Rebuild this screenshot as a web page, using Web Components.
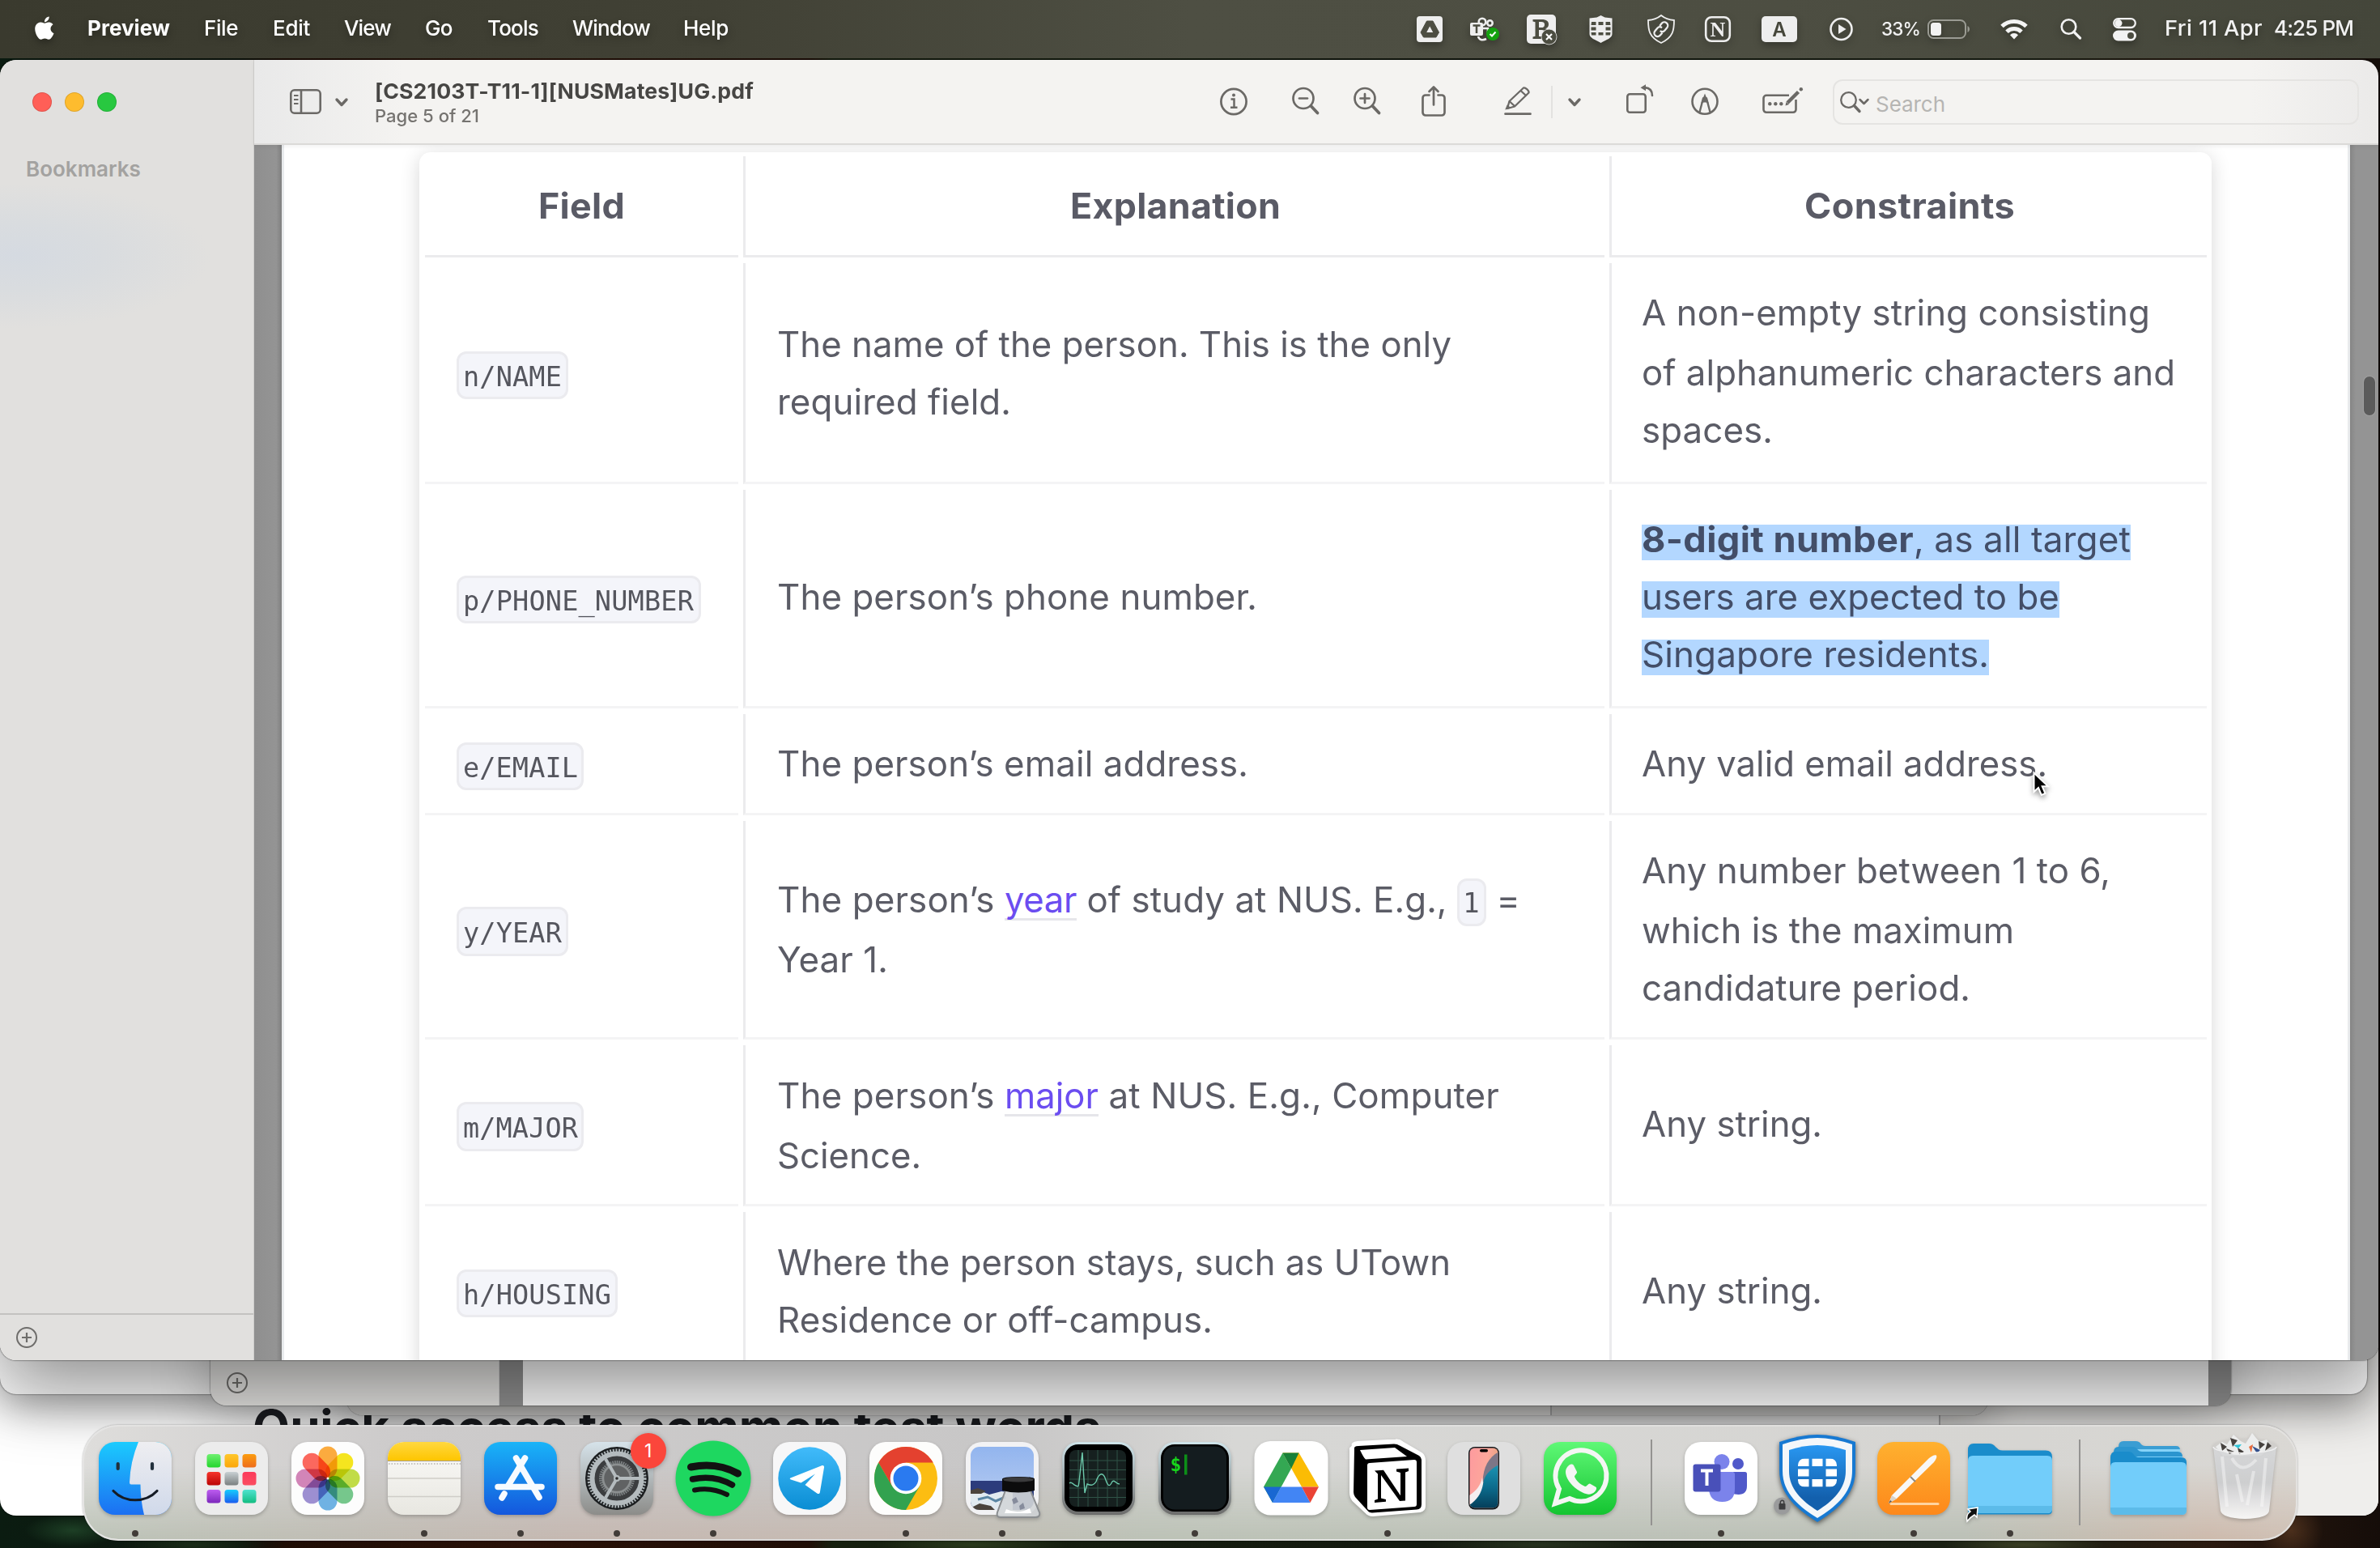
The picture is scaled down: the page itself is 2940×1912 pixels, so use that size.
<!DOCTYPE html>
<html lang="en">
<head>
<meta charset="utf-8">
<title>Preview</title>
<style>
html,body{margin:0;padding:0;width:2940px;height:1912px;overflow:hidden;background:#0c140f}
body{font-family:Inter,"Liberation Sans",sans-serif;font-optical-sizing:none;font-variation-settings:"opsz" 14;-webkit-font-smoothing:antialiased}
</style>
</head>
<body>
<mac-desktop></mac-desktop>
<script>
const ICONS = {
apple:`<path fill="#fff" d="M21.500 16.600c0-3.600 2.900-5.300 3.100-5.400-1.700-2.500-4.300-2.800-5.200-2.800-2.200-.2-4.300 1.300-5.400 1.300s-2.800-1.300-4.700-1.200C6.900 8.500 4.700 9.900 3.400 12c-2.500 4.300-.6 10.700 1.800 14.200 1.200 1.700 2.600 3.600 4.500 3.600 1.800-.1 2.500-1.200 4.700-1.200s2.800 1.200 4.700 1.100c1.900 0 3.200-1.700 4.400-3.500 1.400-2 1.900-3.900 2-4-.1 0-4-1.500-4-5.600zM18.200 6.100C19.200 4.900 19.900 3.200 19.700 1.500c-1.500.1-3.200 1-4.200 2.200-.9 1.100-1.700 2.800-1.500 4.500 1.600.1 3.200-.9 4.200-2.100z"/>`,
mdrive:`<rect y="2" width="32" height="32" rx="4" fill="#eee"/><path d="M12.500 8h7.500l7.500 14-3.500 6H8.500L5 22z" fill="#4c4d41" stroke="#4c4d41" stroke-linejoin="round"/><path d="M16.200 14.500l4 7.500h-8z" fill="#eee"/>`,
mteams:`<g fill="none" stroke="#eee" stroke-width="2.600"><circle cx="15" cy="9" r="4.300"/><circle cx="24.500" cy="10.500" r="3.200"/><path d="M16 17h6v8M10 27c1 4 5 5.500 10 3"/></g><rect y="10" width="16" height="16" rx="2" fill="#eee"/><path d="M3.500 13.500h9M8 13.500V23" stroke="#4c4d41" stroke-width="2.500"/><circle cx="28" cy="24" r="8" fill="#13a10e"/><path d="M24.500 24l2.500 2.500 4.500-5" fill="none" stroke="#fff" stroke-width="2"/>`,
mb:`<rect width="36" height="36" rx="5" fill="#eee"/><path fill="#4c4d41" fill-rule="evenodd" d="M7.500 6h11c6 0 8.500 2.500 8.500 6 0 3-1.500 4.500-4 5.300 3 .8 5 2.700 5 6 0 4-3 6.700-9 6.700H7.500v-2.500l3-.7V9.200l-3-.7zM15 9v7h3c2.500 0 4-1 4-3.600S20.500 9 18 9zm0 10v8h3.500c3 0 4.500-1.300 4.500-4s-1.500-4-4.500-4z"/><circle cx="27.500" cy="27.500" r="9.500" fill="#4c4d41" stroke="#eee" stroke-width=".8"/><path d="M24 24l7 7M31 24l-7 7" stroke="#fff" stroke-width="2.200"/>`,
mforti:`<path fill="#eee" d="M14.500 1l5 2.500 9 1V24c0 5-7 7-14 11C7.500 31 .5 29 .5 24V4.500l9-1z"/><g fill="#4c4d41"><path d="M3 9h5.500v4H2.500zM11.500 9h6v4h-6zM20.500 9H26l.5 4h-6zM2.500 15.500h6v4h-6zM20.500 15.500h6v4h-6zM2.500 22h6v3.500H3zM11.500 22h6v3.500h-6zM20.500 22h6l-.5 3.500h-5.500z"/></g>`,
mshield:`<g fill="none" stroke="#eee" stroke-width="1.800"><path d="M17 1c5 4 10 5.500 16 6 0 12-1 21-16 28C2 28 1 19 1 7c6-.5 11-2 16-6z"/><g stroke-width="2.300" transform="rotate(40 17 18)"><path d="M13 16v-4a4.200 4.200 0 018.400 0v4.500a4.200 4.200 0 01-4 4"/><path d="M21 20.500v4a4.200 4.200 0 01-8.400 0V20a4.200 4.200 0 014-4"/></g></g>`,
mn:`<rect x="1.200" y="3.200" width="29.600" height="29.600" rx="7" fill="none" stroke="#eee" stroke-width="2.600"/><text x="16" y="27" text-anchor="middle" font-family="Liberation Serif,serif" font-weight="700" font-size="26" fill="#eee">N</text>`,
ma:`<rect y="2" width="44" height="32" rx="5" fill="#eee"/><text x="22" y="27" text-anchor="middle" font-family="Inter,sans-serif" font-weight="600" font-size="24" fill="#45463a">A</text>`,
mplay:`<circle cx="14.500" cy="18" r="13" fill="none" stroke="#eee" stroke-width="2.600"/><path d="M11 12l9.500 6-9.500 6z" fill="#eee"/>`,
mbatt:`<rect x="1" y="7" width="46" height="22" rx="6.500" fill="none" stroke="#9a9b93" stroke-width="2"/><rect x="4" y="10" width="13" height="16" rx="3.500" fill="#f2f2f2"/><path d="M49.500 14c3.300 1.500 3.300 6.500 0 8z" fill="#9a9b93"/>`,
mwifi:`<g fill="none" stroke="#f4f4f4" stroke-width="5"><path d="M2 14.500a21.500 21.500 0 0130 0"/><path d="M8 21.300a12.800 12.800 0 0118 0"/></g><path d="M17 30.500l-5-5.300a7 7 0 0110 0z" fill="#f4f4f4"/>`,
msearch:`<circle cx="10.500" cy="15" r="8.800" fill="none" stroke="#f2f2f2" stroke-width="2.600"/><path d="M17 21.500l7.500 7.500" stroke="#f2f2f2" stroke-width="3.200" stroke-linecap="round"/>`,
mcc:`<rect x="1.200" y="5.200" width="26.600" height="10.800" rx="5.400" fill="none" stroke="#f2f2f2" stroke-width="2.300"/><circle cx="7" cy="10.600" r="4.500" fill="#f2f2f2"/><rect x="0" y="19.500" width="29" height="13" rx="6.500" fill="#f2f2f2"/><circle cx="22" cy="26" r="4" fill="#4c4d41"/>`,
sidebar:`<g fill="none" stroke="#6b6966" stroke-width="2.600"><rect x="1.300" y="7.300" width="36.400" height="28.400" rx="4.500"/><path d="M14 7v29"/><path d="M5 14h5.500M5 19h5.500M5 24h5.500" stroke-width="2"/></g>`,
chev:`<path d="M2 19l6 6.500 6-6.500" fill="none" stroke="#6b6966" stroke-width="3.400" stroke-linecap="round" stroke-linejoin="round"/>`,
info:`<circle cx="17" cy="21.500" r="15.600" fill="none" stroke="#6b6966" stroke-width="2.700"/><circle cx="17" cy="13.600" r="2" fill="#6b6966"/><path d="M13.500 18.500h4v10M13 28.700h8.500" fill="none" stroke="#6b6966" stroke-width="2.500"/>`,
zout:`<g fill="none" stroke="#6b6966" stroke-width="2.700" stroke-linecap="round"><circle cx="14" cy="17.500" r="12.500"/><path d="M9 17.500h10"/><path d="M23.500 27l8 8.500" stroke-width="3.800"/></g>`,
zin:`<g fill="none" stroke="#6b6966" stroke-width="2.700" stroke-linecap="round"><circle cx="14" cy="17.500" r="12.500"/><path d="M8.500 17.500h11M14 12v11"/><path d="M23.500 27l8 8.500" stroke-width="3.800"/></g>`,
share:`<g fill="none" stroke="#6b6966" stroke-width="2.700" stroke-linecap="round" stroke-linejoin="round"><path d="M9.500 13.500H5a3.500 3.500 0 00-3.500 3.500v18A3.500 3.500 0 005 38.500h20a3.500 3.500 0 003.500-3.500V17a3.500 3.500 0 00-3.500-3.500h-4.500"/><path d="M15 25.500V4M9.500 9L15 3.500 20.500 9"/></g>`,
pencil:`<g fill="none" stroke="#6b6966" stroke-width="2.300" stroke-linejoin="round"><path d="M4 30l2.500-9L24 4.500c2-1 7 3.500 6.500 6L13 27.500z"/><path d="M6.500 21l7 6.500M20.500 8l7 6.500"/></g><path d="M1.200 31.500l2.500-6 5.500 4z" fill="#6b6966"/><path d="M1.500 36.700h31" stroke="#6b6966" stroke-width="2.700" stroke-linecap="round"/>`,
rotate:`<g fill="none" stroke="#6b6966" stroke-width="2.600" stroke-linecap="round"><rect x="1.300" y="12.300" width="22.400" height="22.400" rx="3"/><path d="M21 4c7 0 11 3.500 11 10"/></g><path d="M17.500 4.200L24 .2v8z" fill="#6b6966"/>`,
markup:`<circle cx="17" cy="21.300" r="15.500" fill="none" stroke="#6b6966" stroke-width="2.600"/><path d="M10.500 34.500l4.500-17h4l4.500 17" fill="none" stroke="#6b6966" stroke-width="2.400"/><path d="M17 11.500l5 12.500c-3-2-7-2-10 0z" fill="#6b6966"/>`,
form:`<path d="M33 13.800H5A3.500 3.500 0 001.500 17.300v14A3.500 3.500 0 005 34.800h33a3.500 3.500 0 003.500-3.500V19" fill="none" stroke="#6b6966" stroke-width="2.600"/><g fill="#6b6966"><circle cx="9.300" cy="24.300" r="2.200"/><circle cx="16.300" cy="24.300" r="2.200"/><circle cx="23.300" cy="24.300" r="2.200"/></g><path d="M31 23L44.500 9.500" stroke="#6b6966" stroke-width="4.500"/><path d="M28.500 26.500l1-4.500 3.500 3z" fill="#6b6966"/><circle cx="47.800" cy="6.300" r="2.200" fill="#6b6966"/>`,
find:`<circle cx="10.500" cy="19.500" r="9.300" fill="none" stroke="#6b6966" stroke-width="2.300"/><path d="M17.500 26.500l6.500 7" stroke="#6b6966" stroke-width="3.400" stroke-linecap="round"/><path d="M24.500 19l5 5 5-5" fill="none" stroke="#6b6966" stroke-width="2.500" stroke-linecap="round" stroke-linejoin="round"/>`,
plus:`<circle cx="13" cy="13" r="12" fill="none" stroke="#6e6d6b" stroke-width="2"/><path d="M13 7v12M7 13h12" stroke="#6e6d6b" stroke-width="2.200"/>`,
cursor:`<path d="M1.500 1.500v23.500l5.500-5 3.800 9 4.700-2-3.800-8.700h7.300z" fill="#000" stroke="#fff" stroke-width="2"/>`,
finder:`<defs><linearGradient id="a" x2="0" y2="1"><stop stop-color="#1bcbfe"/><stop offset="1" stop-color="#1c6ff2"/></linearGradient><linearGradient id="b" x2="0" y2="1"><stop stop-color="#eeeef1"/><stop offset="1" stop-color="#d0d9ea"/></linearGradient><clipPath id="c"><rect width="90" height="90" rx="20"/></clipPath></defs><g clip-path="url(#c)"><rect width="90" height="90" fill="url(#a)"/><path d="M49 0Q39 24 38 50q0 2.500 2 2.500h11.500q0 19 4.500 37.500h34V0z" fill="url(#b)"/></g><path d="M23.700 27v6M66 27v6" stroke="#22303c" stroke-width="4.200" stroke-linecap="round"/><path d="M18 60.500c14 15 40 15 54 0" fill="none" stroke="#151b24" stroke-width="3.200" stroke-linecap="round"/>`,
launchpad:`<rect width="90" height="90" rx="20" fill="#ececec"/><g>${[['#6ff070','#23d52d'],['#ffc72b','#fba60a'],['#fb9d0f','#ee6c1b'],['#f5342b','#bb0505'],['#c8d0d3','#7a8080'],['#fc3a5b','#fb4d60'],['#bd5df0','#7c27bb'],['#16cdfd','#1b5df0'],['#4fe3d0','#12bd81']].map((c,i)=>`<linearGradient id="g${i}" x2="0" y2="1"><stop stop-color="${c[0]}"/><stop offset="1" stop-color="${c[1]}"/></linearGradient><rect x="${14.500+(i%3)*22}" y="${15+Math.floor(i/3)*22}" width="17" height="16.500" rx="3.500" fill="url(#g${i})"/>`).join('')}</g>`,
photos:`<rect width="90" height="90" rx="20" fill="#fdfdfd"/><g style="isolation:isolate">${['#fba024','#f4e200','#b9d72e','#63c07c','#5ba8e0','#9080cb','#cc74ae','#fb5348'].map((c,i)=>`<rect x="33.500" y="5.500" width="23" height="39" rx="11.500" fill="${c}" style="mix-blend-mode:multiply" opacity=".88" transform="rotate(${i*45} 45 45)"/>`).join('')}</g><circle cx="45" cy="45" r="1.500" fill="#fff"/>`,
notes:`<defs><clipPath id="c"><rect width="90" height="90" rx="20"/></clipPath><linearGradient id="a" x2="0" y2="1"><stop stop-color="#ffd83f"/><stop offset="1" stop-color="#fec500"/></linearGradient><linearGradient id="b" x2="0" y2="1"><stop stop-color="#fbfaf8"/><stop offset="1" stop-color="#e8e7e1"/></linearGradient></defs><g clip-path="url(#c)"><rect width="90" height="90" fill="url(#b)"/><rect width="90" height="23" fill="url(#a)"/><path d="M0 23.500h90" stroke="#a99f86" stroke-width="1.200"/><path d="M1 27h90" stroke="#b5b3ae" stroke-width="1.500" stroke-dasharray="1.500 2"/><path d="M0 45h90M0 67.500h90" stroke="#cfcdc8" stroke-width="1.500"/></g>`,
appstore:`<defs><linearGradient id="a" x2="0" y2="1"><stop stop-color="#19b4f8"/><stop offset="1" stop-color="#1457dd"/></linearGradient></defs><rect width="90" height="90" rx="20" fill="url(#a)"/><g stroke="#f7fbff" stroke-width="7.500" stroke-linecap="round"><path d="M17 55.500h54"/><path d="M39.500 20L68 68.500"/><path d="M50.500 20L30 53.500"/><path d="M25 64l-3 5"/></g>`,
settings:`<defs><linearGradient id="a" x2="0" y2="1"><stop stop-color="#d6e3ea"/><stop offset="1" stop-color="#8c8c89"/></linearGradient></defs><rect width="90" height="90" rx="20" fill="url(#a)"/><circle cx="45" cy="45" r="39" fill="#1b1e20"/><circle cx="45" cy="45" r="34" fill="none" stroke="#aab2b5" stroke-width="5" stroke-dasharray="2 1.600"/><circle cx="45" cy="45" r="30.500" fill="#3b3d3f" stroke="#b4bbbe" stroke-width="6"/><circle cx="45" cy="45" r="19.500" fill="#565858" stroke="#7d8284" stroke-width="5" stroke-dasharray="1.600 1"/><circle cx="45" cy="45" r="17" fill="#606263" stroke="#8b8f90" stroke-width="2.500"/><path d="M45 45h28M45 45L31 21M45 45L31 69" stroke="#b4bbbe" stroke-width="4"/><circle cx="45" cy="45" r="4" fill="#b4bbbe"/><circle cx="45" cy="45" r="1.800" fill="#2b2b2b"/>`,
spotify:`<circle cx="45" cy="45" r="46.500" fill="#1ed760"/><g fill="none" stroke="#121212" stroke-linecap="round"><path d="M17.500 31c20-4 41-1.500 58 8" stroke-width="9"/><path d="M19.500 46c16-3.500 34-1.500 49 7" stroke-width="7.500"/><path d="M22 59.500c14-3 27-1 40 5.500" stroke-width="6"/></g>`,
telegram:`<defs><linearGradient id="a" x2="0" y2="1"><stop stop-color="#41bbfa"/><stop offset="1" stop-color="#0a8dd3"/></linearGradient></defs><rect width="90" height="90" rx="20" fill="#f7f7f8"/><circle cx="45" cy="45" r="38.700" fill="url(#a)"/><path d="M21.500 44.500L60 29.300c2-.7 3.300.3 3 2.300L57.800 62.500c-.5 1.700-2 2-3.500 1L39.500 53 52 39.500 34.500 50.500l-12.500-4c-1.500-.6-1.700-1.400-.5-2z" fill="#fff"/>`,
chrome:`<rect width="90" height="90" rx="20" fill="#fdfdfc"/><circle cx="45" cy="45" r="39" fill="#fcbd12"/><path d="M11.200 25.500A39 39 0 0178.800 25.500H45L28.100 54.700z" fill="#e4412f"/><path d="M11.200 25.500A39 39 0 0045 84L61.900 54.700H45L28.100 54.700z" fill="#32a24f"/><circle cx="45" cy="45" r="19.300" fill="#fff"/><circle cx="45" cy="45" r="15.500" fill="#2a7af0"/>`,
preview:`<defs><clipPath id="c"><rect x="6" y="6" width="78" height="78" rx="11"/></clipPath><linearGradient id="s" x2="0" y2="1"><stop stop-color="#8fb3ee"/><stop offset="1" stop-color="#a9c3f0"/></linearGradient></defs><rect width="90" height="90" rx="20" fill="#f2f2f4"/><g clip-path="url(#c)"><rect width="90" height="50" fill="url(#s)"/><rect y="48" width="90" height="42" fill="#2c3c7c"/><path d="M5 62l12-2 12 5 15-4 14 2v22H5z" fill="#e1eaf0"/><path d="M5 60l10-3 10 4-6 3H5zM5 82l12-6 14 3 6 6H5z" fill="#4b443d"/><path d="M15 71l12-3 10 5 12-5" fill="none" stroke="#5b86a4" stroke-width="3"/></g><path d="M49 60h31l11 27c1 4-1 6-5 6H43c-4 0-5-2-4-6z" fill="#d3d6d8" fill-opacity=".9" stroke="#8a8d90" stroke-width="2"/><path d="M50 83q15 7 29-1l2 6H48z" fill="#fff"/><path d="M57 71l5-3 3 6-6 3zM66 79l5-4 2 7-6 2z" fill="#868c9c"/><path d="M45 46q0-3 20-3t20 3v14q-20 5-40 0z" fill="#0c0c0d"/><ellipse cx="65" cy="46.500" rx="19" ry="3" fill="#3a3a3c"/>`,
activity:`<defs><linearGradient id="a" x2="0" y2="1"><stop stop-color="#cfe4ea"/><stop offset="1" stop-color="#6c6c6b"/></linearGradient></defs><rect width="90" height="90" rx="20" fill="url(#a)"/><rect x="3" y="3" width="84" height="83" rx="17" fill="#000"/><rect x="9" y="10" width="70" height="70" rx="8" fill="#16201f"/><path d="M9 23h70M9 34.500h70M9 46h70M9 57h70M9 68.500h70M20 10v70M32 10v70M44 10v70M56 10v70M68 10v70" stroke="#2f5347" stroke-width="1"/><path d="M9 51c3-3 4 2 8 3 3 1 3 3 4-5l4-36 3 50 3-11c5 2 8 2 11-3 4-12 9-12 12-2 3 9 5 8 8 2 3-3 4 3 9 3" fill="none" stroke="#6cc9ab" stroke-width="1.400"/>`,
terminal:`<defs><linearGradient id="a" x2="0" y2="1"><stop stop-color="#cfe4ea"/><stop offset="1" stop-color="#6c6c6b"/></linearGradient></defs><rect width="90" height="90" rx="20" fill="url(#a)"/><rect x="3" y="3" width="84" height="83" rx="17" fill="#000"/><rect x="6" y="5.500" width="78" height="78" rx="14" fill="#141c1f"/><text x="14.500" y="36" font-family="DejaVu Sans Mono,monospace" font-weight="700" font-size="23" fill="#18d61c">$</text><rect x="32" y="15.500" width="3.500" height="25" fill="#0c8f18"/>`,
drive:`<rect x="-.5" y="-1" width="91" height="91.500" rx="20" fill="#fff"/><path d="M34.500 13.500h20L79 55.500H58z" fill="#fbbc04"/><path d="M34.500 13.500L45 33 22 75 11 55.500z" fill="#34a853"/><path d="M34.500 13.500h20L45 33z" fill="#188038"/><path d="M11 55.500h21.500L22 75z" fill="#1967d2"/><path d="M32.500 55.500H58L68.500 75H22z" fill="#4285f4"/><path d="M58 55.500h21L68.500 75z" fill="#ea4335"/>`,
notion:`<path d="M2 5Q0 1 8 0L55-2.500q5-.5 9 3L87 14q4 3 4 9v56q0 6-6 7l-58 5q-6 0-9-4L2 72Q-1 68-1 62V8z" fill="#fff" stroke="#fff" stroke-width="2"/><path d="M4 9q-1-4 5-4l44-2.500q4 0 7 2L84 17q3 2 3 5v55q0 6-6 6.500l-55 4q-4 0-6-3L5 68q-2-3-2-6z" fill="#000"/><path d="M11 10l43-3 15 11-51 3.500q-2-1-7-11.500z" fill="#fff"/><path d="M20 29q0-3 3-3l55-4q3 0 3 3v52q0 3-3 3l-55 4q-3 0-3-3z" fill="#fff"/><path d="M29 35.500l11-.7 21 31.500V38l-5-1.500V33.500l15-1V36l-4 1.500V72.500l-7 .5L37 41v28.500l6 1.500v2.800L29 75v-3l4-1.500V39.500z" fill="#000"/>`,
iphone:`<defs><clipPath id="c"><rect x="27.500" y="7.500" width="35" height="74" rx="6"/></clipPath><linearGradient id="p" x2="1" y2=".3"><stop stop-color="#fd9a9e"/><stop offset=".6" stop-color="#fda79b"/><stop offset="1" stop-color="#e5a27c"/></linearGradient><linearGradient id="u" x2="0" y2="1"><stop stop-color="#1c94b4"/><stop offset=".5" stop-color="#0c6c8d"/><stop offset="1" stop-color="#053a55"/></linearGradient></defs><rect width="90" height="90" rx="20" fill="#dfdfdf"/><rect x="26" y="6" width="38" height="77.500" rx="8" fill="#14181c"/><g clip-path="url(#c)"><rect x="27" y="7" width="37" height="76" fill="url(#p)"/><path d="M64 12C52 18 44 30 43.500 50L64 32z" fill="#7d7687"/><path d="M43 44c-2 10-8 17-16 22v14h10l8-24z" fill="#f6eef0"/><path d="M64 28C52 34 45 42 44 52 42 64 36 72 27 78v6h37z" fill="url(#u)"/></g><rect x="40" y="9" width="10" height="3.500" rx="1.700" fill="#000"/>`,
whatsapp:`<defs><linearGradient id="a" x2="0" y2="1"><stop stop-color="#5ff876"/><stop offset="1" stop-color="#14c431"/></linearGradient></defs><rect width="90" height="90" rx="20" fill="url(#a)"/><path d="M14 76l5-18a31.500 31.500 0 1113 12z" fill="none" stroke="#f4f6f4" stroke-width="6"/><path d="M31 29c2-2 5-2 6 0l4 8c.500 2-3 4-3 6 2 5 8 10 13 12 2 .5 4-4 6-3.500l7 4c2 1 1 4-1 6-4 4-9 4-15 1-9-4-17-12-20-20-2-6-1-10 3-13.500z" fill="#f4f6f4"/>`,
teams:`<rect width="90" height="90" rx="20" fill="#fff"/><circle cx="66" cy="27" r="7" fill="#5059c9"/><circle cx="46" cy="24.500" r="9.500" fill="#7b83eb"/><path d="M60 37h14.500q2.500 0 2.500 2.500V54q0 11-10.500 11T56 58z" fill="#5059c9"/><path d="M32 37h27q3 0 3 3v18q0 16-15.500 16T30 58z" fill="#7b83eb"/><rect x="10.500" y="27.500" width="34" height="34" rx="3" fill="#4950b9"/><path d="M20 35.500h15M27.500 35.500V54" stroke="#fff" stroke-width="4"/>`,
forti:`<defs><linearGradient id="a" x2="0" y2="1"><stop stop-color="#2997f1"/><stop offset=".8" stop-color="#1360ad"/></linearGradient><clipPath id="r"><rect x="21" y="20.500" width="48" height="35" rx="8"/></clipPath></defs><path d="M-2 0Q24-9 45-9T92 0v35c0 32-25 50-47 64C23 85-2 67-2 35z" fill="#1779d2" style="filter:drop-shadow(0 2px 3px #0006)"/><path d="M2 3Q26-5 45-5T88 3v33c0 28-22 45-43 58C24 81 2 64 2 36z" fill="#f4f7fa"/><path d="M10 10q18-6 35-6t35 6v26c0 22-16 37-35 49C26 73 10 58 10 36z" fill="url(#a)"/><g clip-path="url(#r)" fill="#fff"><path d="M21 20.500h13.500v9.500H21zM38.500 20.500h13v9.500h-13zM55.500 20.500H69v9.500H55.500zM21 33.500h13.500v9H21zM55.500 33.500H69v9H55.500zM21 46h13.500v9.500H21zM38.500 46h13v9.500h-13zM55.500 46H69v9.500H55.500z"/></g><circle cx="1.500" cy="79" r="10.500" fill="#9a9b9c"/><rect x="-2.500" y="76" width="8" height="7.500" rx="1" fill="#3c3c3e"/><path d="M-.7 77v-2.500a2.200 2.200 0 014.400 0V77" fill="none" stroke="#3c3c3e" stroke-width="1.500"/>`,
pages:`<defs><linearGradient id="a" x2="0" y2="1"><stop stop-color="#ffb12f"/><stop offset="1" stop-color="#fd881b"/></linearGradient></defs><rect width="90" height="90" rx="20" fill="url(#a)"/><path d="M17 76.500h58" stroke="#ffd3a0" stroke-width="3" stroke-linecap="round"/><path d="M14 76l4-10L64 20q6-5 9-3.500 1.500 3-3.500 9L24 70z" fill="#f8f7f6"/><path d="M14 76l4-10 6 4z" fill="#d9d2c8"/><path d="M14 76l2-4 2 1.500z" fill="#555"/><path d="M41 43l6 6" stroke="#8b8781" stroke-width="2"/>`,
folder:`<path d="M-7 10q0-8 7-8h19q5 0 8 4l4 3.500q2 1 5 1h53q8 0 8 8v66q0 5-5 5H-2q-5 0-5-5z" fill="#1a8ccb"/><path d="M-7 23q0-6 6-6h92q6 0 6 6v59q0 6-6 6H-1q-6 0-6-6z" fill="#72cdfa"/><path d="M-7 79h104v3q0 6-6 6H-1q-6 0-6-6z" fill="#5cbbe9"/><path d="M-8 98q-2-8 4-12l-3-3 12-2-1 12-3-3q-5 3-9 8z" fill="#111" stroke="#fff" stroke-width="1.500"/>`,
stack:`<path d="M8 6q0-7 6-7h15q5 0 7 4 2 2 5 2h38q5 0 5 5v20H4z" fill="#3a9dd3"/><path d="M13 9h71v8H13z" fill="#86d3f8"/><path d="M2 13q0-7 6-7h17q5 0 7 4 2 2 5 2h44q6 0 6 6v12H2z" fill="#2b95cf"/><path d="M5 18h82v7H5z" fill="#7dd0f9"/><path d="M-2 20q0-8 6-8h16q5 0 7 4 2 3 5 3h53q7 0 7 6v57q0 7-6 7H4q-6 0-6-6z" fill="#1a8ccb"/><path d="M-2 31q0-6 6-6h82q6 0 6 6v53q0 6-6 6H4q-6 0-6-6z" fill="#72cdfa"/><path d="M-2 81h94v3q0 6-6 6H4q-6 0-6-6z" fill="#5cbbe9"/>`,
trash:`<defs><linearGradient id="a" x2="0" y2="1"><stop stop-color="#d8d9da"/><stop offset=".5" stop-color="#cfd0d2"/><stop offset="1" stop-color="#fbfbfb"/></linearGradient></defs><ellipse cx="45" cy="5" rx="39" ry="9" fill="#d0cecb"/><path d="M9 6l8-6 6 3 8-12 9 8 6 3 8-13 9 11 9-3 5 8-12 12H18z" fill="#eceded"/><path d="M15 1l8 5-6 5zM27-5l9 3-6 8zM22 8l10 4-6 3zM62-1l8 4-7 6zM73 0l5 5-8 6zM36 7l8 5-6 3z" fill="#46423f"/><path d="M31 4l10-1-4 5z" fill="#2ec4d8"/><path d="M50 6l5-3-2 10z" fill="#ea6b3b"/><path d="M54 5l10 5-4 4z" fill="#34508c"/><path d="M6 6q20 12 39 10T84 6l-9 79q-1 9-30 10-28-1-30-10z" fill="url(#a)" fill-opacity=".93"/><path d="M6 6q0 6 39 8 39-2 39-8" fill="none" stroke="#f1f1f1" stroke-width="1.500"/><path d="M17 18l6 62M29 20q12 22 30 2M71 20l-5 60M35 40l7 34M56 36l-8 42" stroke="#fff" stroke-opacity=".4" stroke-width="4" fill="none"/>`
};
const define = (name, css, html, after) => {
  const t = document.createElement('template');
  t.innerHTML = `<style>${css}</style>${html}`;
  customElements.define(name, class extends HTMLElement {
    connectedCallback(){
      if (this.shadowRoot) return;
      this.attachShadow({mode:'open'}).append(t.content.cloneNode(true));
      if (after) after(this);
    }
  });
};

/* A glyph from the icon table, drawn 1:1 in its own box */
define('ui-icon', ':host{display:block;flex:none}svg{display:block;overflow:visible}', '<svg></svg>', el => {
  const w = el.getAttribute('w') || 90, h = el.getAttribute('h') || 90, s = el.shadowRoot.querySelector('svg');
  s.setAttribute('width', w); s.setAttribute('height', h); s.setAttribute('viewBox', `0 0 ${w} ${h}`);
  s.innerHTML = ICONS[el.getAttribute('name')];
});

/* One line of text fitted to an exact width: glyphs widen a little, tracking takes the rest */
define('fit-text', ':host{display:block;white-space:pre;flex:none}span{display:inline-block;white-space:pre;transform-origin:0 50%}', '<span><slot></slot></span>', el => {
  const w = +el.getAttribute('w'), s = el.shadowRoot.querySelector('span');
  el.style.width = w + 'px';
  const n = el.textContent.length, nat = s.getBoundingClientRect().width;
  if (!nat) return;
  const k = Math.min(1.05, Math.max(1, 1 + (w / nat - 1) * .7));
  el.style.letterSpacing = ((w / k - nat) / n).toFixed(3) + 'px';
  if (k > 1.002) s.style.transform = `scaleX(${k.toFixed(4)})`;
});

define('menu-bar', `
:host{display:flex;align-items:center;height:72px;box-sizing:border-box;padding-left:41px;color:#fff;font-size:26px;line-height:69px;font-weight:500;
 background:linear-gradient(90deg,#3a3a2e 0,#414135 30%,#4e4f43 50%,#4d4e42 75%,#44463a 100%);position:relative;z-index:5}
fit-text,ui-icon{filter:drop-shadow(0 4px 5px rgba(0,0,0,.3))}
fit-text{height:72px}
.b{font-weight:700}.r{display:flex;align-items:center;margin-left:850px;color:#f2f2f2}`,
`<ui-icon name="apple" w="27" h="34"></ui-icon>
<fit-text class="b" w="102" style="margin-left:40px">Preview</fit-text>
<fit-text w="42" style="margin-left:42px">File</fit-text>
<fit-text w="46" style="margin-left:43px">Edit</fit-text>
<fit-text w="58" style="margin-left:42px">View</fit-text>
<fit-text w="34" style="margin-left:42px">Go</fit-text>
<fit-text w="63" style="margin-left:43px">Tools</fit-text>
<fit-text w="96" style="margin-left:42px">Window</fit-text>
<fit-text w="56" style="margin-left:41px">Help</fit-text>
<div class="r">
<ui-icon name="mdrive" w="32" h="36"></ui-icon>
<ui-icon name="mteams" w="36" h="36" style="margin-left:34px"></ui-icon>
<ui-icon name="mb" w="36" h="36" style="margin-left:34px"></ui-icon>
<ui-icon name="mforti" w="29" h="36" style="margin-left:41px"></ui-icon>
<ui-icon name="mshield" w="34" h="36" style="margin-left:43px"></ui-icon>
<ui-icon name="mn" w="32" h="36" style="margin-left:37px"></ui-icon>
<ui-icon name="ma" w="44" h="36" style="margin-left:38px"></ui-icon>
<ui-icon name="mplay" w="29" h="36" style="margin-left:40px"></ui-icon>
<fit-text w="48" style="margin-left:35px;font-size:22.500px;line-height:71px">33%</fit-text>
<ui-icon name="mbatt" w="52" h="36" style="margin-left:9px"></ui-icon>
<ui-icon name="mwifi" w="34" h="36" style="margin-left:38px"></ui-icon>
<ui-icon name="msearch" w="26" h="36" style="margin-left:40px"></ui-icon>
<ui-icon name="mcc" w="29" h="36" style="margin-left:39px"></ui-icon>
<fit-text w="121" style="margin-left:35px">Fri 11 Apr</fit-text>
<fit-text w="98" style="margin-left:14px">4:25 PM</fit-text>
</div>`);

define('side-bar', `
:host{display:flex;flex-direction:column;width:314px;box-sizing:border-box;flex:none;border-right:1px solid #cfcecc;
 background:radial-gradient(ellipse 240px 90px at 20px 242px,#d5dae1 0,#d9dcdf 45%,#e1e0de 100%) #e1e0de}
.t{display:flex;gap:16px;padding:40px 0 0 40px}
.t i{width:24px;height:24px;border-radius:50%;box-shadow:inset 0 0 0 1px rgba(0,0,0,.12)}
fit-text{margin:46px 0 0 32px;font-weight:600;font-size:26px;line-height:50px;color:#a3a2a0}
.f{margin-top:auto;border-top:2px solid #c3c2c0;padding:15px 0 0 20px;box-sizing:border-box;height:58px}`,
`<div class="t"><i style="background:#ff5f57"></i><i style="background:#febc2e"></i><i style="background:#28c840"></i></div>
<fit-text w="142">Bookmarks</fit-text>
<div class="f"><ui-icon name="plus" w="26" h="26"></ui-icon></div>`);

define('tool-bar', `
:host{display:flex;align-items:center;height:105px;flex:none;box-sizing:border-box;padding-left:44px;border-bottom:2px solid #dbdad8;background:linear-gradient(90deg,#e9e9e9,#f4f3f1 7%,#f4f3f1 94%,#ebeae9);position:relative;z-index:1;box-shadow:0 2px 5px rgba(0,0,0,.06)}
ui-icon{margin-top:1px}
.t{margin:3px 0 0 33px;width:467px;flex:none}
.a{font-weight:700;font-size:26px;line-height:32px;color:#474644}
.s{font-size:22px;line-height:28px;color:#757370;font-weight:450}
.d{width:2px;height:40px;background:#e3e2e0;margin-left:24px;flex:none}
.q{display:flex;align-items:center;margin-left:37px;width:650px;height:56px;flex:none;box-sizing:border-box;border:2px solid #e5e4e2;border-radius:12px;padding-left:7px;color:#b6b5b3;font-size:26px;line-height:52px}
.q ui-icon{margin-top:0}.q fit-text{margin:6px 0 0 8px}`,
`<ui-icon name="sidebar" w="39" h="44"></ui-icon>
<ui-icon name="chev" w="16" h="44" style="margin-left:17px"></ui-icon>
<div class="t"><fit-text class="a" w="467">[CS2103T-T11-1][NUSMates]UG.pdf</fit-text><fit-text class="s" w="129">Page 5 of 21</fit-text></div>
<ui-icon name="info" w="34" h="44" style="margin-left:577px"></ui-icon>
<ui-icon name="zout" w="34" h="44" style="margin-left:55px"></ui-icon>
<ui-icon name="zin" w="34" h="44" style="margin-left:42px"></ui-icon>
<ui-icon name="share" w="30" h="44" style="margin-left:50px"></ui-icon>
<ui-icon name="pencil" w="34" h="44" style="margin-left:72px"></ui-icon>
<span class="d"></span>
<ui-icon name="chev" w="16" h="44" style="margin-left:19px"></ui-icon>
<ui-icon name="rotate" w="33" h="44" style="margin-left:56px"></ui-icon>
<ui-icon name="markup" w="34" h="44" style="margin-left:47px"></ui-icon>
<ui-icon name="form" w="50" h="44" style="margin-left:54px"></ui-icon>
<div class="q"><ui-icon name="find" w="36" h="44"></ui-icon><fit-text w="86">Search</fit-text></div>`);

define('code-chip', `
:host{display:flex;box-sizing:border-box;flex:none;border:3px solid #ebebef;border-radius:12px;background:#f4f5fa;padding:3px 0 0 5px;
 font-family:"DejaVu Sans Mono",monospace;font-size:33px;color:#55565e;align-items:center}
fit-text{line-height:40px}`, '<slot></slot>');

define('table-cell', `
:host{display:block;box-sizing:border-box;border-bottom:3px solid #f4f4f5;border-left:3px solid #ebebed;padding-left:39px;min-width:0}
:host([first]){border-left:0}
:host([head]){border-bottom-color:#ebebed;padding-left:0;padding-top:26px;font-weight:650;color:#5a5b66;display:flex;justify-content:center}`, '<slot></slot>');

define('field-table', `
:host{display:block;flex:none;width:2214px;box-sizing:border-box;margin:9px 0 0 170px;padding:5px 7px;border-radius:14px;background:#fff;
 box-shadow:0 4px 24px rgba(0,0,0,.16);color:#5b5c66;font-size:43.500px;line-height:71px;height:1700px}
.g{display:grid;grid-template-columns:387px 1064px 738px;column-gap:6px;row-gap:7px;grid-template-rows:125px 273px 270px 125px 270px 199px 260px}
.c{padding-left:37px}
.h{color:#434e68;background:linear-gradient(transparent 16.500px,#b3d7ff 16.500px 61px,transparent 61px)}
.b{font-weight:700}
.l{display:flex;align-items:center}
.k{color:#6b4df0;background:linear-gradient(#e6e6ea,#e6e6ea) 0 58px/100% 3px no-repeat}`,
`<div class="g">
<table-cell head first><fit-text w="107">Field</fit-text></table-cell>
<table-cell head><fit-text w="260">Explanation</fit-text></table-cell>
<table-cell head><fit-text w="260">Constraints</fit-text></table-cell>

<table-cell first style="padding-top:109px"><code-chip style="width:138px;height:59px"><fit-text w="122">n/NAME</fit-text></code-chip></table-cell>
<table-cell style="padding-top:65px"><fit-text w="833">The name of the person. This is the only</fit-text><fit-text w="289">required field.</fit-text></table-cell>
<table-cell class="c" style="padding-top:26px"><fit-text w="628">A non-empty string consisting</fit-text><fit-text w="659" style="margin-top:3px">of alphanumeric characters and</fit-text><fit-text w="162">spaces.</fit-text></table-cell>

<table-cell first style="padding-top:106px"><code-chip style="width:302px;height:59px"><fit-text w="285">p/PHONE_NUMBER</fit-text></code-chip></table-cell>
<table-cell style="padding-top:97px"><fit-text w="593">The person’s phone number.</fit-text></table-cell>
<table-cell class="c" style="padding-top:26px"><div class="l"><fit-text class="h b" w="336">8-digit number</fit-text><fit-text class="h" w="268">, as all target</fit-text></div><fit-text class="h" w="516">users are expected to be</fit-text><fit-text class="h" w="429">Singapore residents.</fit-text></table-cell>

<table-cell first style="padding-top:35px"><code-chip style="width:157px;height:59px"><fit-text w="142">e/EMAIL</fit-text></code-chip></table-cell>
<table-cell style="padding-top:26px"><fit-text w="582">The person’s email address.</fit-text></table-cell>
<table-cell class="c" style="padding-top:26px"><fit-text w="501">Any valid email address.</fit-text></table-cell>

<table-cell first style="padding-top:106px"><code-chip style="width:138px;height:61px"><fit-text w="122">y/YEAR</fit-text></code-chip></table-cell>
<table-cell style="padding-top:62px"><div class="l"><fit-text w="281">The person’s </fit-text><fit-text class="k" w="89">year</fit-text><fit-text w="470"> of study at NUS. E.g., </fit-text><code-chip style="width:36px;height:59px;margin-top:5px;padding-left:4px"><fit-text w="21">1</fit-text></code-chip><fit-text w="42"> =</fit-text></div><fit-text w="137" style="margin-top:3px">Year 1.</fit-text></table-cell>
<table-cell class="c" style="padding-top:26px"><fit-text w="579">Any number between 1 to 6,</fit-text><fit-text w="460" style="margin-top:3px">which is the maximum</fit-text><fit-text w="406">candidature period.</fit-text></table-cell>

<table-cell first style="padding-top:70px"><code-chip style="width:157px;height:61px"><fit-text w="142">m/MAJOR</fit-text></code-chip></table-cell>
<table-cell style="padding-top:27px"><div class="l"><fit-text w="281">The person’s </fit-text><fit-text class="k" w="116">major</fit-text><fit-text w="495"> at NUS. E.g., Computer</fit-text></div><fit-text w="178" style="margin-top:3px">Science.</fit-text></table-cell>
<table-cell class="c" style="padding-top:62px"><fit-text w="223">Any string.</fit-text></table-cell>

<table-cell first style="padding-top:71px"><code-chip style="width:199px;height:59px"><fit-text w="183">h/HOUSING</fit-text></code-chip></table-cell>
<table-cell style="padding-top:27px"><fit-text w="832">Where the person stays, such as UTown</fit-text><fit-text w="538">Residence or off-campus.</fit-text></table-cell>
<table-cell class="c" style="padding-top:62px"><fit-text w="223">Any string.</fit-text></table-cell>
</div>`);

define('pdf-view', `
:host{display:flex;flex:1;min-height:0;overflow:hidden;background:#929292}
.g{width:34px;flex:none;background:linear-gradient(90deg,#8f8f8f,#949494 80%,#808080)}
.p{flex:1;background:#fff;border:solid #e9ebed;border-width:0 3px;box-sizing:border-box;overflow:hidden}
.s{width:35px;flex:none;background:linear-gradient(90deg,#858585,#949494 20%);box-sizing:border-box;padding:286px 0 0 17px}
.s i{display:block;width:14px;height:48px;border-radius:7px;background:#5b5b5b;box-shadow:0 0 0 1px #a0a0a0}
field-table{margin-left:167px}`,
`<div class="g"></div><div class="p"><field-table></field-table></div><div class="s"><i></i></div>`);

define('preview-window', `
:host{display:flex;border-radius:20px;overflow:hidden}
.m{display:flex;flex-direction:column;flex:1;min-width:0}
side-bar{height:100%}`,
`<side-bar></side-bar><div class="m"><tool-bar></tool-bar><pdf-view></pdf-view></div>`);

define('back-preview', `
:host{display:flex;align-items:stretch}
.a{width:357px;background:#e1e0de;display:flex;align-items:flex-end;padding:0 0 15px 20px;box-sizing:border-box;border-right:1px solid #ccc}
.b{width:29px;background:#8e8e8e}.c{flex:1;background:#fafafa}`,
`<div class="a"><ui-icon name="plus" w="26" h="26"></ui-icon></div><div class="b"></div><div class="c"></div><div class="b" style="width:28px"></div>`);

define('back-page', `
:host{display:flex;background:#fff}
.a{width:2397px;border-right:2px solid #bbb;padding:728px 0 0 312px;box-sizing:border-box;font-weight:700;font-size:60px;line-height:70px;color:#1f2126}
.b{flex:1;background:#efeeec}`,
`<div class="a"><fit-text w="1048">Quick access to common test words</fit-text></div><div class="b"></div>`);

define('dock-item', `
:host{display:flex;flex-direction:column;align-items:center;width:118.950px;flex:none;position:relative;padding-top:21px;box-sizing:border-box}
ui-icon{filter:drop-shadow(0 2px 2px rgba(0,0,0,.22))}
i{width:8px;height:8px;border-radius:50%;background:#413c38;margin-top:19px}
:host(:not([open])) i{display:none}
.n{position:absolute;left:76px;top:10px;width:44px;height:44px;border-radius:50%;background:#fb463b;color:#fff;font-size:23px;line-height:44px;text-align:center;box-shadow:0 1px 6px #0004}`,
`<ui-icon></ui-icon><i></i>`, el => {
  const o = el.shadowRoot.querySelector('ui-icon'), n = document.createElement('ui-icon');
  n.setAttribute('name', el.getAttribute('name'));
  o.replaceWith(n);
  const b = el.getAttribute('badge');
  if (b) { const s = document.createElement('span'); s.className = 'n'; s.textContent = b; el.shadowRoot.append(s); }
});

define('app-dock', `
:host{display:flex;width:2736px;height:143px;box-sizing:border-box;border-radius:44px;padding-left:6px;box-shadow:inset 0 0 0 2px rgba(240,240,240,.4),0 0 2px rgba(0,0,0,.4);
 background:linear-gradient(90deg,#dedddb 0,#cdcbcb 14%,#c8c7c7 42%,#d7d7d5 52%,#d6d5d2 88%,#dad8d4 100%);position:relative}
.t{position:absolute;inset:2px;border-radius:42px;background:linear-gradient(90deg,#bcc3b7 0,#c0bdb4 12%,#c5b8b1 22%,#c6bbb3 36%,#bcc2b6 48%,#bbc0b6 85%,#cdbaac 96%,#cfc0b4);-webkit-mask-image:linear-gradient(transparent 35%,#000);mask-image:linear-gradient(transparent 35%,#000)}
.d{width:2px;height:106px;background:#949391;margin:18px 26px 0 27.500px;flex:none;position:relative}`,
`<div class="t"></div>
<dock-item name="finder" open></dock-item><dock-item name="launchpad"></dock-item><dock-item name="photos"></dock-item><dock-item name="notes" open></dock-item><dock-item name="appstore" open></dock-item><dock-item name="settings" open badge="1"></dock-item><dock-item name="spotify" open></dock-item><dock-item name="telegram"></dock-item><dock-item name="chrome" open></dock-item><dock-item name="preview" open></dock-item><dock-item name="activity" open></dock-item><dock-item name="terminal" open></dock-item><dock-item name="drive"></dock-item><dock-item name="notion" open></dock-item><dock-item name="iphone"></dock-item><dock-item name="whatsapp"></dock-item>
<div class="d"></div>
<dock-item name="teams" open></dock-item><dock-item name="forti"></dock-item><dock-item name="pages" open></dock-item><dock-item name="folder" open></dock-item>
<div class="d" style="margin:18px 24.500px 0 25.500px"></div>
<dock-item name="stack"></dock-item><dock-item name="trash"></dock-item>`);

define('mac-desktop', `
:host{display:block;position:relative;width:2940px;height:1912px;overflow:hidden;
 background:
 radial-gradient(ellipse 60px 20px at 90px 1890px,#1d3f25,transparent),
 radial-gradient(ellipse 90px 14px at 240px 1908px,#1a2c18,transparent),
 radial-gradient(ellipse 40px 40px at 2830px 1890px,#4b2f1c,transparent),
 radial-gradient(ellipse 120px 12px at 1200px 1908px,#2a3a1c,transparent),
 radial-gradient(ellipse 140px 12px at 1900px 1908px,#26321e,transparent),
 radial-gradient(ellipse 100px 12px at 2500px 1908px,#3b3f24,transparent),
 linear-gradient(90deg,#0b1c11 0,#0c150d 10%,#1f0d05 12%,#2a1208 22%,#200e06 34%,#16200f 35%,#141a10 60%,#1b2114 85%,#2b1a10 93%,#150d09 100%)}
.w{position:absolute;border-radius:20px;overflow:hidden}
.w5{left:0;top:1000px;width:2938px;height:872px;box-shadow:0 0 2px #000}
.w4{left:428px;top:1100px;width:2028px;height:648px;background:linear-gradient(90deg,#dedddb 1487px,#aaa 1487px 1489px,#cfcecc 1489px);box-shadow:0 0 1px #000,0 10px 50px rgba(0,0,0,.26)}
.w2{left:0;top:1100px;width:2924px;height:622px;background:#fbfbfb;box-shadow:0 0 2px rgba(0,0,0,.8),0 14px 50px rgba(0,0,0,.34)}
.w3{left:260px;top:1100px;width:2496px;height:636px;box-shadow:0 0 2px rgba(0,0,0,.8),0 14px 70px rgba(0,0,0,.26)}
.w1{left:0;top:74px;width:2938px;height:1606px;box-shadow:0 0 2px #000,0 32px 90px rgba(0,0,0,.44)}
.k{position:absolute;left:102px;top:1760px}
.c{position:absolute;left:2511px;top:953px;filter:drop-shadow(0 3px 3px rgba(0,0,0,.4))}`,
`<menu-bar></menu-bar>
<back-page class="w w5"></back-page>
<div class="w w4"></div>
<div class="w w2"></div>
<back-preview class="w w3"></back-preview>
<preview-window class="w w1"></preview-window>
<app-dock class="k"></app-dock>
<ui-icon class="c" name="cursor" w="21" h="31"></ui-icon>`);
</script>
</body>
</html>
